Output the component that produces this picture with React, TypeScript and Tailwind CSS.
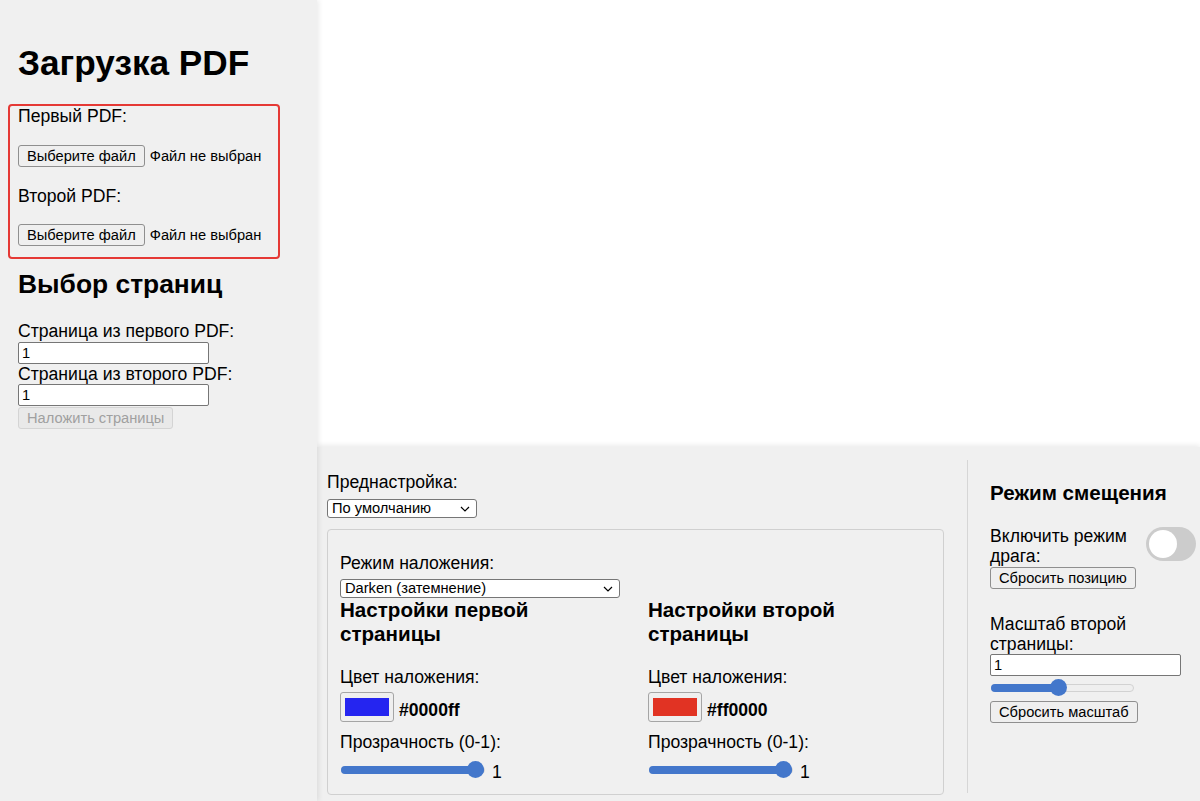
import React from "react";

const Btn = ({
  children,
  disabled,
  className = "",
}: {
  children: React.ReactNode;
  disabled?: boolean;
  className?: string;
}) => (
  <button
    disabled={disabled}
    className={
      disabled
        ? `h-[22px] px-[8px] text-[14.67px] leading-none rounded-[3px] border border-[#d4d4d4] bg-[#e9e9e9] text-[#a0a0a0] ${className}`
        : `h-[22px] px-[8px] text-[14.67px] leading-none rounded-[3px] border border-[#8f8f8f] bg-[#efefef] text-black ${className}`
    }
  >
    {children}
  </button>
);

const FakeSelect = ({ value, className }: { value: string; className: string }) => (
  <div
    className={`flex items-center justify-between h-[19px] pl-[4px] pr-[6px] bg-white border border-[#767676] rounded-[3px] text-[14.67px] leading-none ${className}`}
  >
    <span>{value}</span>
    <svg width="10" height="6" viewBox="0 0 10 6" fill="none">
      <path d="M1 1l4 4 4-4" stroke="#000" strokeWidth="1.2" />
    </svg>
  </div>
);

const Slider = ({ track, fill, thumb }: { track: string; fill: string; thumb: string }) => (
  <div className={`relative h-[17px] ${track}`}>
    <div className="absolute left-[1px] right-[1px] top-[4.5px] h-[8px] rounded-full bg-[#efefef] border border-[#d2d2d2]" />
    <div className={`absolute left-[1px] top-[4.5px] h-[8px] rounded-full bg-[#4377cb] ${fill}`} />
    <div className={`absolute top-0 w-[17px] h-[17px] rounded-full bg-[#4377cb] ${thumb}`} />
  </div>
);

const Swatch = ({ color }: { color: string }) => (
  <div className="w-[54px] h-[30px] flex items-center justify-center border border-[#a5a5a5] rounded-[3px] bg-[#efefef]">
    <div className={`w-[44px] h-[18px] ${color}`} />
  </div>
);

const TextInput = ({ className = "" }: { className?: string }) => (
  <div
    className={`w-[191px] h-[22px] flex items-center pl-[3px] bg-white border border-[#767676] rounded-[2px] text-[14.67px] ${className}`}
  >
    1
  </div>
);

const PageSettings = ({ title, hex, color }: { title: string; hex: string; color: string }) => (
  <div>
    <h3 className="text-[20.6px] leading-[24px] font-bold">{title}</h3>
    <div className="mt-[21px] text-[17.6px] leading-[20px]">Цвет наложения:</div>
    <div className="mt-[5px] flex items-end gap-[5px]">
      <Swatch color={color} />
      <span className="mb-[2px] text-[17.6px] leading-[20px] font-bold">{hex}</span>
    </div>
    <div className="mt-[10px] text-[17.6px] leading-[20px]">Прозрачность (0-1):</div>
    <div className="mt-[9px] flex items-end gap-[6px]">
      <Slider track="w-[146px] mb-[4px]" fill="w-[143px]" thumb="left-[127px]" />
      <span className="text-[17.6px] leading-[20px]">1</span>
    </div>
  </div>
);

export default function App() {
  return (
    <div className="flex h-[801px] w-full overflow-hidden font-['Liberation_Sans',Arial,sans-serif] text-black">
      {/* Sidebar */}
      <aside className="relative z-10 w-[317px] shrink-0 bg-[#f0f0f0] shadow-[2px_0_5px_rgba(0,0,0,0.08)]">
        <h1 className="mt-[43px] pl-[18px] text-[35.2px] leading-[40px] font-bold">Загрузка PDF</h1>

        <div className="mt-[21px] ml-[8px] w-[272px] border-2 border-[#e53935] rounded-[4px] pl-[8px] pb-[11px]">
          <div className="text-[17.6px] leading-[20px]">Первый PDF:</div>
          <div className="mt-[19px] flex items-center gap-[5px]">
            <Btn>Выберите файл</Btn>
            <span className="text-[14.67px]">Файл не выбран</span>
          </div>
          <div className="mt-[19px] text-[17.6px] leading-[20px]">Второй PDF:</div>
          <div className="mt-[18px] flex items-center gap-[5px]">
            <Btn>Выберите файл</Btn>
            <span className="text-[14.67px]">Файл не выбран</span>
          </div>
        </div>

        <div className="pl-[18px]">
          <h2 className="mt-[10px] text-[26.4px] leading-[30px] font-bold">Выбор страниц</h2>
          <div className="mt-[22px] text-[17.6px] leading-[20px]">Страница из первого PDF:</div>
          <TextInput className="mt-[1px]" />
          <div className="text-[17.6px] leading-[20px]">Страница из второго PDF:</div>
          <TextInput />
          <Btn disabled className="mt-[1px]">
            Наложить страницы
          </Btn>
        </div>
      </aside>

      {/* Main */}
      <main className="flex-1 flex flex-col">
        <div className="h-[447px] bg-white" />

        <section className="flex-1 flex bg-[#f0f0f0] pl-[10px] shadow-[0_-2px_5px_rgba(0,0,0,0.08)]">
          <div className="w-[617px] pt-[25px]">
            <div className="text-[17.6px] leading-[20px]">Преднастройка:</div>
            <FakeSelect value="По умолчанию" className="mt-[7px] w-[150px]" />

            <div className="mt-[11px] border border-[#d0d0d0] rounded-[4px] pl-[12px] pt-[23px] pb-[12px]">
              <div className="text-[17.6px] leading-[20px]">Режим наложения:</div>
              <FakeSelect value="Darken (затемнение)" className="mt-[6px] w-[280px]" />
              <div className="grid grid-cols-[250px_250px] gap-x-[58px]">
                <PageSettings title="Настройки первой страницы" hex="#0000ff" color="bg-[#2525f0]" />
                <PageSettings title="Настройки второй страницы" hex="#ff0000" color="bg-[#e13323]" />
              </div>
            </div>
          </div>

          <div className="ml-[23px] mt-[13px] mb-[8px] w-px bg-[#d6d6d6]" />

          <div className="ml-[22px] w-[206px] pt-[34px]">
            <h3 className="text-[20.6px] leading-[24px] font-bold">Режим смещения</h3>
            <div className="mt-[21px] flex items-start gap-[10px]">
              <div className="flex-1 text-[17.6px] leading-[20px]">Включить режим драга:</div>
              <div className="relative mt-[1px] w-[50px] h-[34px] shrink-0 rounded-full bg-[#cccccc]">
                <div className="absolute left-[3px] top-[3px] w-[28px] h-[28px] rounded-full bg-white" />
              </div>
            </div>
            <Btn>Сбросить позицию</Btn>

            <div className="mt-[24px] text-[17.6px] leading-[20px]">Масштаб второй страницы:</div>
            <TextInput />
            <div className="mt-[3px]">
              <Slider track="w-[145px]" fill="w-[68px]" thumb="left-[60px]" />
            </div>
            <Btn className="mt-[5px]">Сбросить масштаб</Btn>
          </div>
        </section>
      </main>
    </div>
  );
}
